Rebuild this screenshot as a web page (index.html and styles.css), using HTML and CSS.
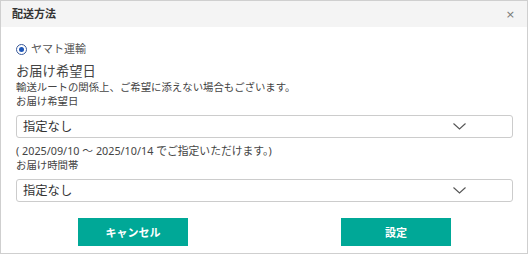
FILE: index.html
```html
<!DOCTYPE html>
<html lang="ja">
<head>
  <meta charset="UTF-8">
  <meta name="viewport" content="width=device-width, initial-scale=1.0">
  <title>配送方法</title>
  <link rel="stylesheet" href="styles.css">
</head>
<body>
  <div class="modal">
    <div class="modal-header">
      <span class="modal-title">配送方法</span>
      <button class="close" type="button">×</button>
    </div>
    <div class="modal-body">
      <label class="radio">
        <input type="radio" name="carrier" checked>
        <span class="radio-mark"></span>
        <span>ヤマト運輸</span>
      </label>
      <div class="heading">お届け希望日</div>
      <div class="note">輸送ルートの関係上、ご希望に添えない場合もございます。</div>
      <div class="label">お届け希望日</div>
      <div class="select-wrap">
        <select class="select">
          <option>指定なし</option>
        </select>
        <svg class="chevron" width="13" height="7" viewBox="0 0 13 7"><path d="M0.5 0.5 L6.5 6 L12.5 0.5" fill="none" stroke="#555" stroke-width="1.1"/></svg>
      </div>
      <div class="note range">( 2025/09/10 ～ 2025/10/14 でご指定いただけます。)</div>
      <div class="label">お届け時間帯</div>
      <div class="select-wrap">
        <select class="select">
          <option>指定なし</option>
        </select>
        <svg class="chevron" width="13" height="7" viewBox="0 0 13 7"><path d="M0.5 0.5 L6.5 6 L12.5 0.5" fill="none" stroke="#555" stroke-width="1.1"/></svg>
      </div>
      <div class="actions">
        <button class="btn" type="button">キャンセル</button>
        <button class="btn" type="button">設定</button>
      </div>
    </div>
  </div>
</body>
</html>
```

FILE: styles.css
```css
* { box-sizing: border-box; }
body {
  margin: 0;
  background: #fff;
  font-family: "Noto Sans", "Noto Sans CJK JP", sans-serif;
  color: #333;
}
.modal {
  width: 528px;
  height: 254px;
  border: 1px solid #cfcfcf;
  background: #fff;
}
.modal-header {
  height: 26px;
  background: #f4f4f4;
  display: flex;
  align-items: center;
  justify-content: space-between;
  padding: 0 12px 0 11px;
}
.modal-title { font-size: 11px; font-weight: bold; color: #333; line-height: 14px; }
.close {
  border: none; background: none; padding: 0;
  font-size: 11px; color: #777; line-height: 1;
  font-family: "DejaVu Sans", sans-serif;
}
.modal-body { padding: 0 14px 0 15px; }
.radio {
  display: flex; align-items: center; gap: 4px;
  margin-top: 15px; height: 14px; line-height: 14px;
  font-size: 11px; color: #555;
}
.radio input { display: none; }
.radio-mark {
  width: 11px; height: 11px; border-radius: 50%;
  border: 1px solid #3a5a9a;
  display: flex; align-items: center; justify-content: center;
}
.radio-mark::after {
  content: ""; width: 5px; height: 5px; border-radius: 50%;
  background: #1d56b8;
}
.heading { margin-top: 7px; font-size: 13.3px; line-height: 17px; height: 17px; color: #444; }
.note { font-size: 10.4px; line-height: 14px; height: 14px; color: #444; }
.label { font-size: 10.4px; line-height: 15px; height: 15px; color: #444; }
.range { margin-top: 5px; line-height: 15px; height: 15px; font-size: 10.8px; }
.select-wrap { position: relative; margin-top: 6px; height: 23px; }
.select {
  display: block;
  width: 100%; height: 23px;
  appearance: none; -webkit-appearance: none;
  border: 1px solid #ccc; border-radius: 3px;
  background: #fff;
  padding: 0 6px;
  font-family: inherit; font-size: 12.3px; color: #333;
}
.chevron { position: absolute; right: 47px; top: 8px; }
.actions {
  display: flex; justify-content: center; gap: 153px;
  margin-top: 16px;
}
.btn {
  width: 110px; height: 28px;
  border: none; background: #00a897; color: #fff;
  font-family: inherit; font-size: 11px; font-weight: bold;
}
```
